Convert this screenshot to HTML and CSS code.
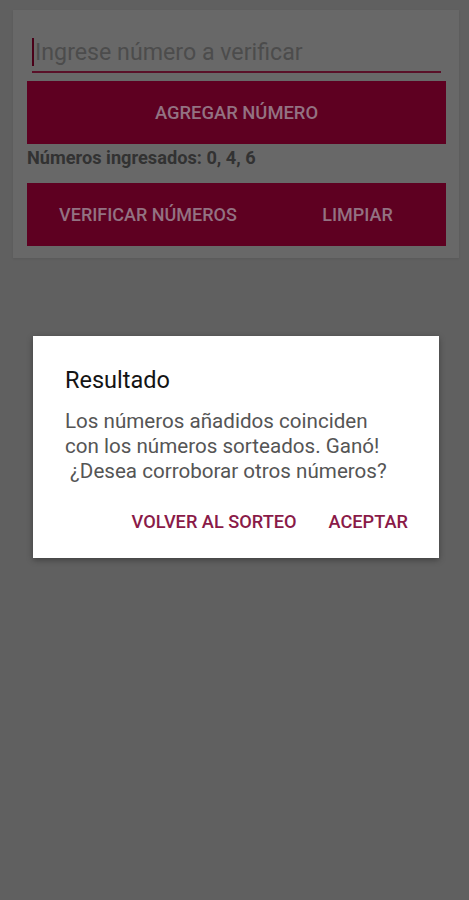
FILE: index.html
```html
<!DOCTYPE html>
<html lang="es">
<head>
<meta charset="utf-8">
<link rel="stylesheet" href="styles.css">
</head>
<body>
<div class="card">
  <div class="field"><span class="cursor"></span><span class="placeholder">Ingrese número a verificar</span></div>
  <div class="btn btn-first">AGREGAR NÚMERO</div>
  <div class="list">Números ingresados: 0, 4, 6</div>
  <div class="btn btn-row">
    <span class="b1">VERIFICAR NÚMEROS</span>
    <span class="b2">LIMPIAR</span>
  </div>
</div>
<div class="dialog">
  <div class="title">Resultado</div>
  <div class="msg">Los números añadidos coinciden<br>con los números sorteados. Ganó!<br>&nbsp;¿Desea corroborar otros números?</div>
  <div class="actions">
    <span class="act">VOLVER AL SORTEO</span>
    <span class="act">ACEPTAR</span>
  </div>
</div>
</body>
</html>
```
FILE: styles.css
```css
html, body {
  margin: 0;
  padding: 0;
  height: 100%;
}
body {
  background: #606060;
  font-family: Roboto, "Noto Sans", sans-serif;
  position: relative;
  overflow: hidden;
}
.card {
  margin: 10px 10px 0 13px;
  background: #686868;
  padding: 25px 13px 12px 14px;
  box-shadow: 0 1px 2px rgba(0,0,0,0.08);
}
.field {
  margin: 0 5px;
  height: 34px;
  border-bottom: 2px solid #5a1028;
  display: flex;
  align-items: center;
  padding-bottom: 2px;
}
.cursor {
  width: 2px;
  height: 28px;
  background: #4a0018;
  margin-right: 1px;
}
.placeholder {
  font-size: 23.2px;
  color: #4c4c4c;
}
.btn {
  margin-top: 10px;
  height: 63px;
  background: #5e0021;
  color: #937282;
  font-size: 18.4px;
  font-weight: 500;
  display: flex;
  align-items: center;
  justify-content: center;
}
.btn-first {
  margin-top: 8px;
}
.list {
  margin-top: 3px;
  font-size: 18.2px;
  font-weight: 700;
  color: #323232;
  height: 26px;
  line-height: 22px;
}
.btn-row {
  margin-top: 10px;
  display: grid;
  grid-template-columns: 242px 1fr;
  justify-items: center;
  align-items: center;
  font-size: 18px;
}
.dialog {
  position: absolute;
  left: 33px;
  top: 336px;
  width: 406px;
  height: 222px;
  box-sizing: border-box;
  background: #ffffff;
  box-shadow: 0 2px 6px rgba(0,0,0,0.35);
  padding: 29px 31px 0 32px;
}
.title {
  font-size: 23.5px;
  color: #141414;
  line-height: 30px;
}
.msg {
  margin-top: 14px;
  font-size: 20.6px;
  line-height: 25px;
  color: #555555;
}
.actions {
  margin-top: 27px;
  display: flex;
  justify-content: flex-end;
  gap: 32px;
}
.act {
  font-size: 18.2px;
  font-weight: 500;
  color: #8a1a48;
}
```
